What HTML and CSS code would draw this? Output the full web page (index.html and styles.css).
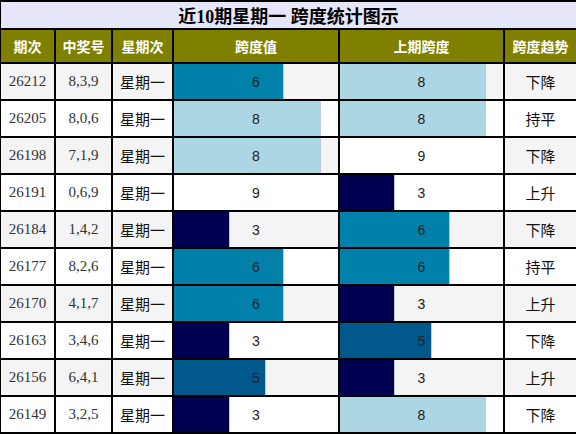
FILE: index.html
```html
<!DOCTYPE html>
<html lang="zh">
<head>
    <meta charset="UTF-8">
    <meta name="viewport" content="width=device-width, initial-scale=1.0">
    <title>近10期星期一 跨度统计图示</title>
    <link rel="stylesheet" href="styles.css">
</head>
<body>
    <table class="span-table">
        <colgroup>
            <col class="col-issue">
            <col class="col-nums">
            <col class="col-week">
            <col class="col-span">
            <col class="col-prev">
            <col class="col-trend">
        </colgroup>
        <thead>
            <tr class="title-row">
                <th colspan="6">近10期星期一 跨度统计图示</th>
            </tr>
            <tr class="head-row">
                <th>期次</th>
                <th>中奖号</th>
                <th>星期次</th>
                <th>跨度值</th>
                <th>上期跨度</th>
                <th>跨度趋势</th>
            </tr>
        </thead>
        <tbody id="spanBody"></tbody>
    </table>

    <script>
        // 期次, 中奖号, 跨度, 上期跨度, 趋势
        const draws = [
            ["26212", "8,3,9", 6, 8, "下降"],
            ["26205", "8,0,6", 8, 8, "持平"],
            ["26198", "7,1,9", 8, 9, "下降"],
            ["26191", "0,6,9", 9, 3, "上升"],
            ["26184", "1,4,2", 3, 6, "下降"],
            ["26177", "8,2,6", 6, 6, "持平"],
            ["26170", "4,1,7", 6, 3, "上升"],
            ["26163", "3,4,6", 3, 5, "下降"],
            ["26156", "6,4,1", 5, 3, "上升"],
            ["26149", "3,2,5", 3, 8, "下降"]
        ];

        function barCell(value) {
            const width = (value / 9 * 100).toFixed(2);
            return `<td class="bar-cell"><div class="track">` +
                `<div class="bar v${value}" style="width:${width}%"></div>` +
                `<span class="bar-label">${value}</span></div></td>`;
        }

        function renderRows() {
            const body = document.getElementById('spanBody');
            let html = '';
            draws.forEach(([issue, nums, span, prev, trend]) => {
                html += '<tr>';
                html += `<td class="num">${issue}</td>`;
                html += `<td class="num">${nums}</td>`;
                html += '<td class="cn">星期一</td>';
                html += barCell(span);
                html += barCell(prev);
                html += `<td class="cn">${trend}</td>`;
                html += '</tr>';
            });
            body.innerHTML = html;
        }

        renderRows();
    </script>
</body>
</html>
```

FILE: styles.css
```css
body {
    margin: 0;
    background: #fff;
    font-family: "Liberation Serif", "Noto Sans CJK SC", serif;
    color: #222;
}

.span-table {
    width: 577px;
    margin-left: -1px;
    border-collapse: collapse;
    table-layout: fixed;
}

.col-issue { width: 55px; }
.col-nums { width: 57px; }
.col-week { width: 61px; }
.col-span { width: 166px; }
.col-prev { width: 165px; }
.col-trend { width: 73px; }

.span-table th,
.span-table td {
    border: 2px solid #000;
    padding: 0;
    text-align: center;
}

.title-row th {
    height: 24px;
    background: #e6e6fa;
    color: #000;
    font-size: 18px;
    font-weight: bold;
}

.head-row th {
    height: 32px;
    background: #808000;
    color: #fff;
    font-family: "Noto Sans CJK SC", sans-serif;
    font-size: 14px;
    font-weight: bold;
}

.span-table tbody tr:nth-child(odd) {
    background: #f4f4f4;
}

.span-table tbody td {
    height: 35px;
}

.num {
    font-size: 15px;
    color: #333;
}

.cn {
    font-family: "Noto Sans CJK SC", sans-serif;
    font-size: 15px;
    color: #111;
}

.bar-cell .track {
    position: relative;
    height: 35px;
    display: flex;
    align-items: center;
    justify-content: center;
}

.bar {
    position: absolute;
    left: 0;
    top: 0;
    bottom: 0;
    box-shadow: 1px 0 0 rgba(150, 170, 200, 0.6);
}

.bar-label {
    position: relative;
    font-family: "Liberation Sans", sans-serif;
    font-size: 14px;
    color: #222;
}

.v3 { background: #000050; }
.v5 { background: #00588c; }
.v6 { background: #0081aa; }
.v8 { background: #add6e4; }
.v9 { background: #fff; box-shadow: none; }
```
